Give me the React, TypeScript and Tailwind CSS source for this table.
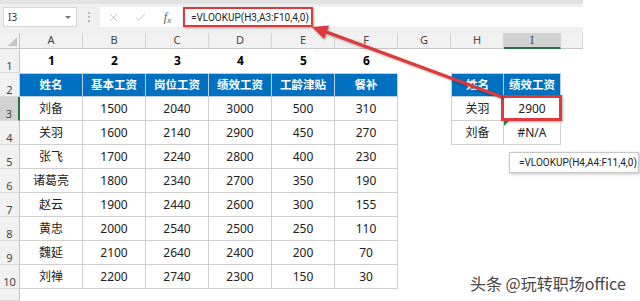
import React from 'react';
import { X, Check } from 'lucide-react';

const COLS = ['A', 'B', 'C', 'D', 'E', 'F', 'G', 'H', 'I', ''];
const HEADERS = ['姓名', '基本工资', '岗位工资', '绩效工资', '工龄津贴', '餐补'];
const DATA: (string | number)[][] = [
  ['刘备', 1500, 2040, 3000, 500, 310],
  ['关羽', 1600, 2140, 2900, 450, 270],
  ['张飞', 1700, 2240, 2800, 400, 230],
  ['诸葛亮', 1800, 2340, 2700, 350, 190],
  ['赵云', 1900, 2440, 2600, 300, 155],
  ['黄忠', 2000, 2540, 2500, 250, 110],
  ['魏延', 2100, 2640, 2400, 200, 70],
  ['刘禅', 2200, 2740, 2300, 150, 30],
];

// 右侧查询表
const LOOKUP: Record<number, [string, string]> = {
  3: ['关羽', '2900'],
  4: ['刘备', '#N/A'],
};

function RowHead({ n, active }: { n?: number; active?: boolean }) {
  return (
    <div
      className={
        'flex items-end justify-center pb-[1px] text-[11px] leading-none text-[#444] border-b border-[#d8d8d8] ' +
        (active ? 'bg-[#d2d2d2] border-r-2 border-r-[#217346]' : 'bg-[#f1f1f1] border-r border-r-[#c6c6c6]')
      }
    >
      {n}
    </div>
  );
}

export default function App() {
  const cells: React.ReactNode[] = [];

  // 列标题
  cells.push(
    <div key="corner" className="relative bg-[#f1f1f1] border-r border-b border-[#c6c6c6]">
      <div className="absolute right-[2px] bottom-[2px] w-0 h-0 border-l-[9px] border-l-transparent border-b-[9px] border-b-[#c4c4c4]" />
    </div>
  );
  COLS.forEach((c, i) =>
    cells.push(
      <div
        key={'h' + i}
        className={
          'flex items-center justify-center text-[11px] text-[#444] border-r border-r-[#d4d4d4] ' +
          (c === 'I' ? 'bg-[#d2d2d2] border-b-2 border-b-[#217346]' : 'bg-[#f1f1f1] border-b border-b-[#c6c6c6]')
        }
      >
        {c}
      </div>
    )
  );

  // 第1行：列号
  cells.push(<RowHead key="r1" n={1} />);
  COLS.forEach((_, i) =>
    cells.push(
      <div key={'n' + i} className="flex items-center justify-center text-[12px] font-bold text-black">
        {i < 6 ? i + 1 : ''}
      </div>
    )
  );

  // 第2行：表头
  cells.push(<RowHead key="r2" n={2} />);
  COLS.forEach((_, i) => {
    let label = '';
    if (i < 6) label = HEADERS[i];
    if (i === 7) label = '姓名';
    if (i === 8) label = '绩效工资';
    const blue = label !== '';
    cells.push(
      <div
        key={'t' + i}
        className={
          blue
            ? 'flex items-center justify-center bg-[#0070c0] text-white text-[11.5px] font-bold border-t border-r border-b border-[#b9cfe2] ' +
              (i === 7 ? 'border-l' : '')
            : ''
        }
      >
        {label}
      </div>
    );
  });

  // 数据行
  DATA.forEach((row, r) => {
    const rowNum = r + 3;
    cells.push(<RowHead key={'rh' + rowNum} n={rowNum} active={rowNum === 3} />);
    COLS.forEach((_, i) => {
      const key = rowNum + '-' + i;
      if (i < 6) {
        cells.push(
          <div key={key} className="flex items-center justify-center text-[12px] text-[#222] border-r border-b border-[#cfcfcf]">
            {row[i]}
          </div>
        );
      } else if ((i === 7 || i === 8) && LOOKUP[rowNum]) {
        const v = LOOKUP[rowNum][i - 7];
        cells.push(
          <div
            key={key}
            className={
              'relative flex items-center justify-center text-[12px] text-[#222] border-r border-b border-[#cfcfcf] ' +
              (i === 7 ? 'border-l' : '')
            }
          >
            {v}
            {i === 8 && rowNum === 3 && (
              <div className="absolute -left-[3px] -right-[2px] -top-[2px] -bottom-[1px] border-[3px] border-[#e0393c] shadow-[1px_1px_2px_rgba(0,0,0,0.35)]" />
            )}
            {i === 8 && rowNum === 4 && (
              <div className="absolute left-0 top-0 w-0 h-0 border-r-[5px] border-r-transparent border-t-[5px] border-t-[#1f8a3c]" />
            )}
          </div>
        );
      } else {
        cells.push(<div key={key} />);
      }
    });
  });

  cells.push(<RowHead key="r11" />);

  return (
    <div className="relative w-[640px] h-[301px] overflow-hidden bg-white font-['Noto_Sans','Noto_Sans_CJK_SC',sans-serif]">
      {/* 编辑栏 */}
      <div className="w-[583px] h-[33px] bg-[#efefef] border-t-[4px] border-[#e2e2e2] pt-[3px] flex items-start">
        <div className="ml-[3px] w-[74px] h-[20px] bg-white border border-[#d8d8d8] flex items-center justify-between pl-[4px] pr-[5px]">
          <span className="text-[10px] text-[#333]">I3</span>
          <span className="w-0 h-0 border-l-[3px] border-r-[3px] border-t-[3px] border-l-transparent border-r-transparent border-t-[#777]" />
        </div>
        <div className="w-[23px] h-[20px] flex flex-col items-center justify-center gap-[2px]">
          <span className="w-[2px] h-[2px] bg-[#b8b8b8]" />
          <span className="w-[2px] h-[2px] bg-[#b8b8b8]" />
          <span className="w-[2px] h-[2px] bg-[#b8b8b8]" />
        </div>
        <div className="w-[82px] h-[20px] bg-white flex items-center">
          <span className="w-[27px] flex justify-center">
            <X size={13} strokeWidth={1.4} color="#b5b5b5" />
          </span>
          <span className="w-[27px] flex justify-center">
            <Check size={13} strokeWidth={1.4} color="#b5b5b5" />
          </span>
          <span className="w-[27px] flex justify-center items-baseline font-['Liberation_Serif',serif] italic text-[12px] leading-none text-[#555]">
            f<span className="text-[9px] relative top-[2px]">x</span>
          </span>
        </div>
        <div className="relative ml-[1px] flex-1 h-[20px] bg-white">
          <div className="absolute left-0 top-0 w-[130px] h-[20px] border-2 border-[#e0393c] shadow-[1px_1px_2px_rgba(0,0,0,0.3)]" />
          <div className="pl-[8px] h-full flex items-center text-[10px] text-[#222] font-['Roboto',sans-serif]">
            =VLOOKUP(H3,A3:F10,4,0)
          </div>
        </div>
      </div>

      {/* 工作表 */}
      <div className="grid w-[583px] grid-cols-[20px_63px_63px_63px_63px_63px_63px_53px_53px_57px_22px] grid-rows-[16px_repeat(10,24px)_12px]">
        {cells}
      </div>

      {/* 箭头 */}
      <svg className="absolute left-0 top-0 pointer-events-none" width="640" height="301">
        <g style={{ filter: 'drop-shadow(1px 1px 1px rgba(0,0,0,0.35))' }}>
          <line x1="502" y1="97" x2="325" y2="31.5" stroke="#e0393c" strokeWidth="3" />
          <polygon points="312,27 329,25.5 324,39" fill="#e0393c" />
        </g>
      </svg>

      {/* 公式说明 */}
      <div className="absolute left-[509px] top-[152px] w-[130px] h-[21px] bg-white border border-[#c8c8c8] shadow-[1px_1px_3px_rgba(0,0,0,0.25)] flex items-center pl-[9px] text-[10px] text-[#222] font-['Roboto',sans-serif]">
        =VLOOKUP(H4,A4:F11,4,0)
      </div>

      {/* 水印 */}
      <div className="absolute left-[470px] top-[271px] text-[16px] text-[#474747] font-['Noto_Sans_CJK_SC',sans-serif]">
        头条 @玩转职场office
      </div>
    </div>
  );
}
